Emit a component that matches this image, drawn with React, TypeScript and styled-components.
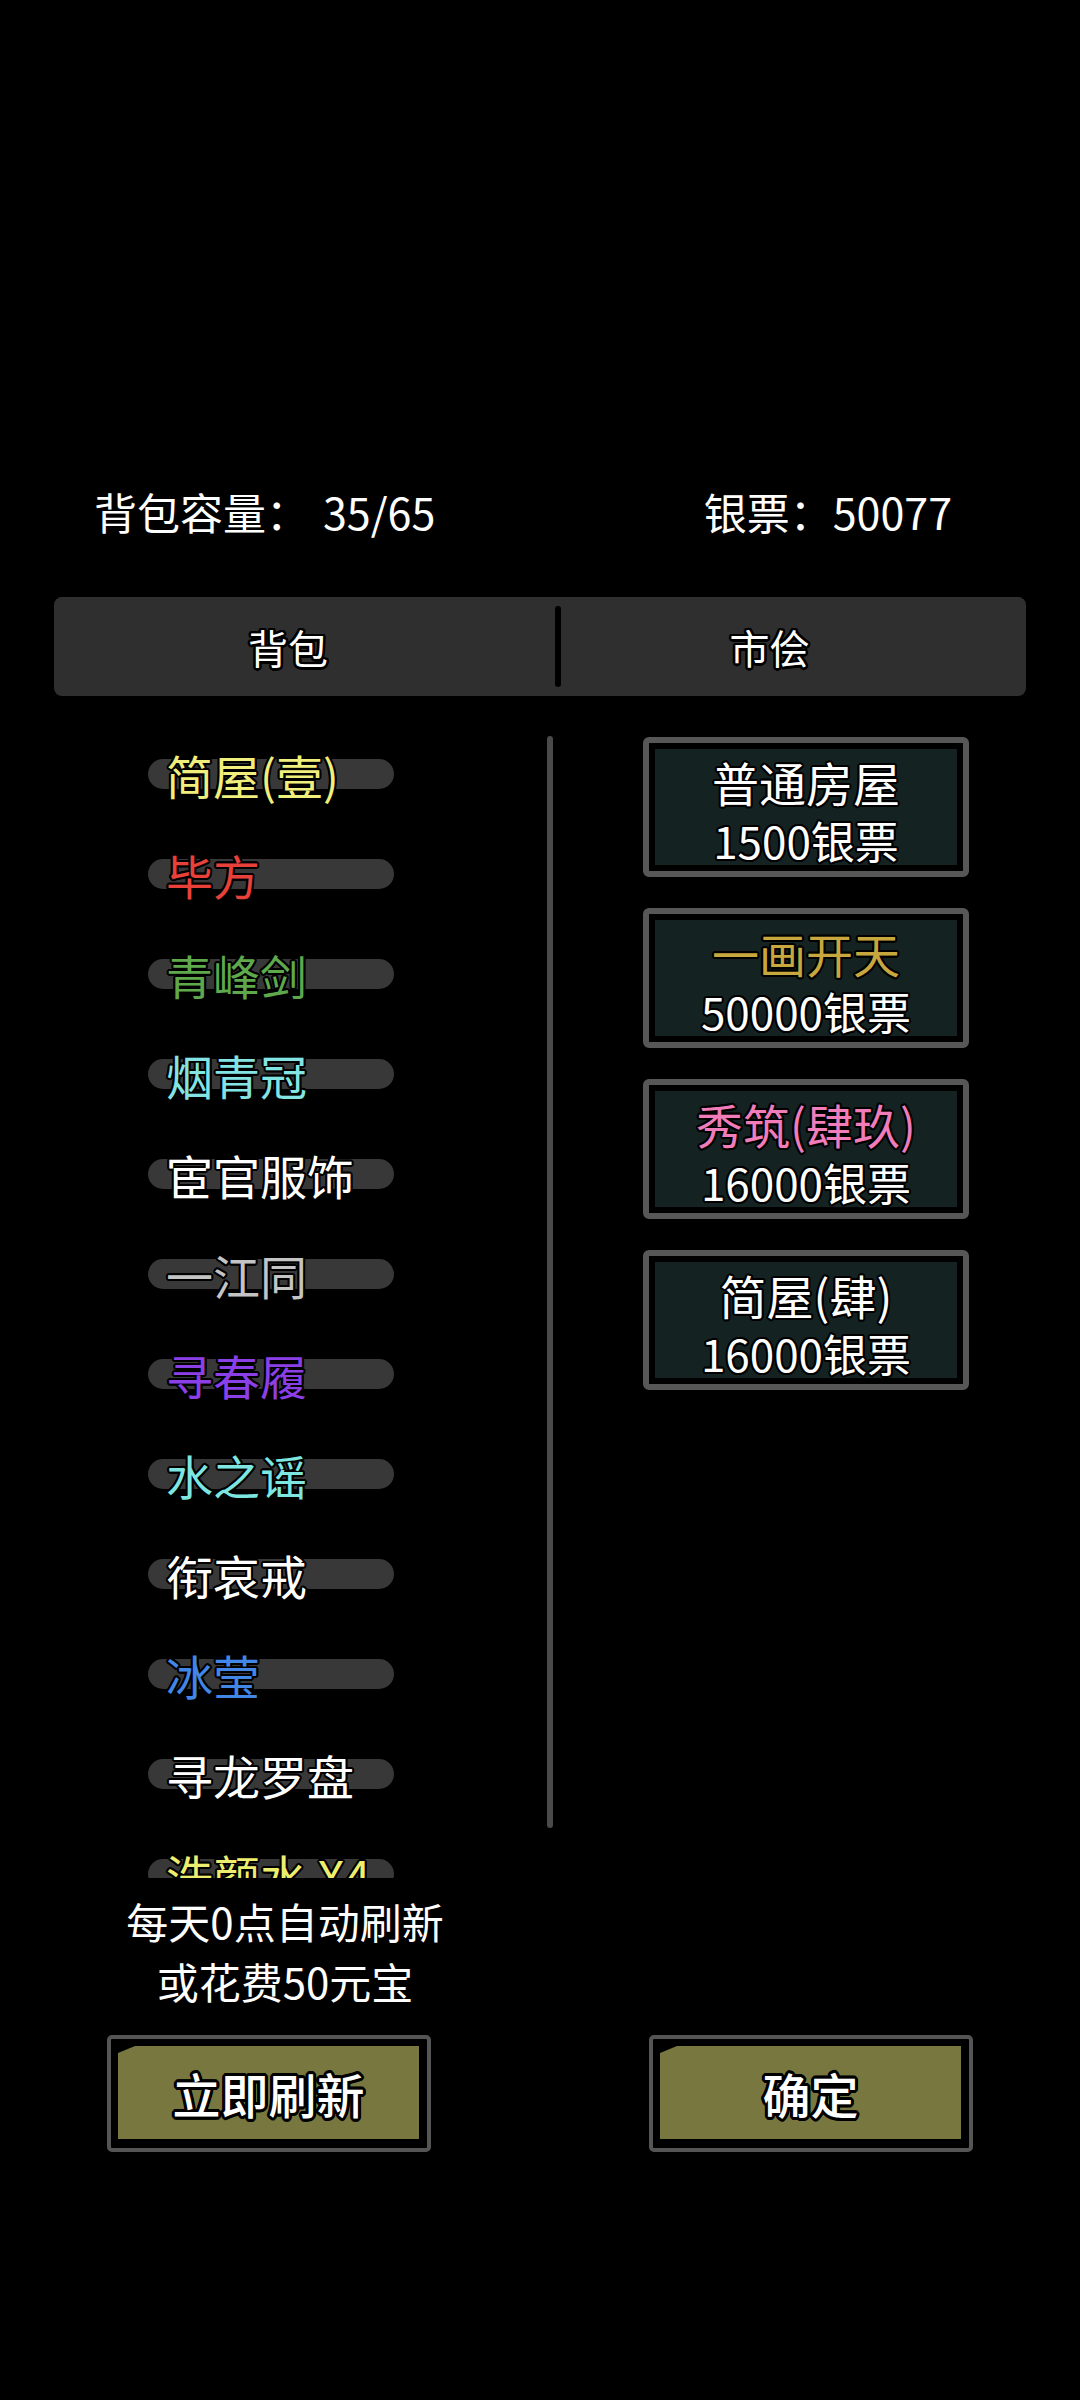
import React from 'react';
import styled, { createGlobalStyle, css } from 'styled-components';

const GlobalStyle = createGlobalStyle`
  html, body {
    margin: 0;
    padding: 0;
    background: #000;
  }
  body {
    font-family: "Noto Sans CJK SC", "Noto Sans", sans-serif;
    color: #ffffff;
  }
`;

// black outline round the glyphs, like the game's stroked labels
const outlineShadow = (w: number) => {
  const parts: string[] = [];
  for (let i = 0; i < 16; i++) {
    const a = (i * Math.PI) / 8;
    parts.push(`${(Math.cos(a) * w).toFixed(1)}px ${(Math.sin(a) * w).toFixed(1)}px 0 #000`);
  }
  return parts.join(', ');
};

const outlined = (w: number) => css`
  text-shadow: ${outlineShadow(w)};
`;

const Page = styled.div`
  width: 1080px;
  height: 2400px;
  box-sizing: border-box;
  padding-top: 480px;
  display: flex;
  flex-direction: column;
  overflow: hidden;
  background: #000;
`;

const Header = styled.div`
  display: flex;
  justify-content: space-between;
  padding: 0 128px 0 94px;
  font-size: 43px;
  line-height: 62px;
  color: #fff;
`;

const Amount = styled.span`
  margin-left: 14px;
`;

const TabBar = styled.div`
  margin: 55px 54px 0;
  height: 99px;
  background: #2f2f2f;
  border-radius: 8px;
  display: grid;
  grid-template-columns: 501px 6px 1fr;
  align-items: center;
`;

const Tab = styled.div<{ $shift: number }>`
  text-align: center;
  padding-right: ${(p) => p.$shift}px;
  font-size: 40px;
  line-height: 1;
  color: #fff;
  ${outlined(2.5)}
`;

const TabDivider = styled.div`
  width: 6px;
  height: 81px;
  background: #000;
  border-radius: 3px;
`;

const Body = styled.div`
  margin-top: 28px;
  padding-left: 54px;
  display: grid;
  grid-template-columns: 504px 1fr;
`;

const LeftCol = styled.div`
  display: flex;
  flex-direction: column;
`;

const ListFrame = styled.div`
  width: 499px;
  height: 1154px;
  display: flex;
  overflow: hidden;
`;

const ItemList = styled.div`
  flex: 1;
  display: flex;
  flex-direction: column;
`;

const ItemRow = styled.div`
  height: 100px;
  flex-shrink: 0;
  display: grid;
  align-items: center;
`;

const Pill = styled.div`
  grid-area: 1 / 1;
  width: 246px;
  height: 30px;
  margin-left: 94px;
  border-radius: 15px;
  background: #383838;
`;

const ItemName = styled.div<{ $color: string }>`
  grid-area: 1 / 1;
  margin-left: 112px;
  font-size: 47px;
  line-height: 1;
  white-space: nowrap;
  color: ${(p) => p.$color};
  ${outlined(2)}
`;

const ScrollThumb = styled.div`
  flex-shrink: 0;
  width: 6px;
  height: 1092px;
  margin-top: 12px;
  border-radius: 3px;
  background: #4a4a4a;
`;

const Note = styled.div`
  margin-top: 13px;
  padding-right: 42px;
  text-align: center;
  font-size: 42px;
  line-height: 60px;
  color: #fff;
  ${outlined(2)}
`;

const RightCol = styled.div`
  padding: 13px 0 0 85px;
  display: flex;
  flex-direction: column;
  gap: 31px;
`;

const ShopCard = styled.div`
  width: 326px;
  height: 140px;
  box-sizing: border-box;
  border: 6px solid #575757;
  border-radius: 6px;
  box-shadow: inset 0 0 0 6px #000;
  background: #152222;
  display: flex;
  flex-direction: column;
  align-items: center;
  justify-content: center;
  padding-top: 8px;
`;

const CardTitle = styled.div<{ $color: string }>`
  font-size: 47px;
  line-height: 59px;
  white-space: nowrap;
  color: ${(p) => p.$color};
  ${outlined(2)}
`;

const CardPrice = styled.div`
  font-size: 44px;
  line-height: 59px;
  white-space: nowrap;
  color: #fff;
  ${outlined(2)}
`;

const Footer = styled.div`
  margin-top: 24px;
  padding-left: 107px;
  display: flex;
  gap: 218px;
`;

const ActionButton = styled.div`
  width: 324px;
  height: 117px;
  box-sizing: border-box;
  border: 4px solid #555;
  border-radius: 5px;
  background: #000;
  padding: 7px 8px 9px 7px;
`;

const ButtonFace = styled.div`
  height: 100%;
  background: #77773f;
  clip-path: polygon(17px 0, 100% 0, 100% 100%, 0 100%, 0 7px);
  display: flex;
  align-items: center;
  justify-content: center;
  font-size: 48px;
  line-height: 1;
  font-weight: 500;
  color: #fff;
  ${outlined(3)}
`;

type Item = { name: string; color: string };

const items: Item[] = [
  { name: '简屋(壹)', color: '#f0ee7c' },
  { name: '毕方', color: '#e8413a' },
  { name: '青峰剑', color: '#5fa84c' },
  { name: '烟青冠', color: '#84e4e4' },
  { name: '宦官服饰', color: '#ffffff' },
  { name: '一江同', color: '#c4c4c4' },
  { name: '寻春履', color: '#8b3fe6' },
  { name: '水之谣', color: '#7ee6e0' },
  { name: '衔哀戒', color: '#ffffff' },
  { name: '冰莹', color: '#4286e6' },
  { name: '寻龙罗盘', color: '#ffffff' },
  { name: '洗颜水 X4', color: '#eeee6e' },
];

type Offer = { title: string; price: string; color: string };

const offers: Offer[] = [
  { title: '普通房屋', price: '1500银票', color: '#ffffff' },
  { title: '一画开天', price: '50000银票', color: '#c8a83e' },
  { title: '秀筑(肆玖)', price: '16000银票', color: '#f07cba' },
  { title: '简屋(肆)', price: '16000银票', color: '#ffffff' },
];

export default function App() {
  return (
    <Page>
      <GlobalStyle />
      <Header>
        <span>
          背包容量：<Amount>35/65</Amount>
        </span>
        <span>银票：50077</span>
      </Header>

      <TabBar>
        <Tab $shift={33}>背包</Tab>
        <TabDivider />
        <Tab $shift={48}>市侩</Tab>
      </TabBar>

      <Body>
        <LeftCol>
          <ListFrame>
            <ItemList>
              {items.map((it) => (
                <ItemRow key={it.name}>
                  <Pill />
                  <ItemName $color={it.color}>{it.name}</ItemName>
                </ItemRow>
              ))}
            </ItemList>
            <ScrollThumb />
          </ListFrame>
          <Note>
            每天0点自动刷新
            <br />
            或花费50元宝
          </Note>
        </LeftCol>

        <RightCol>
          {offers.map((o) => (
            <ShopCard key={o.title}>
              <CardTitle $color={o.color}>{o.title}</CardTitle>
              <CardPrice>{o.price}</CardPrice>
            </ShopCard>
          ))}
        </RightCol>
      </Body>

      <Footer>
        <ActionButton>
          <ButtonFace>立即刷新</ButtonFace>
        </ActionButton>
        <ActionButton>
          <ButtonFace>确定</ButtonFace>
        </ActionButton>
      </Footer>
    </Page>
  );
}
